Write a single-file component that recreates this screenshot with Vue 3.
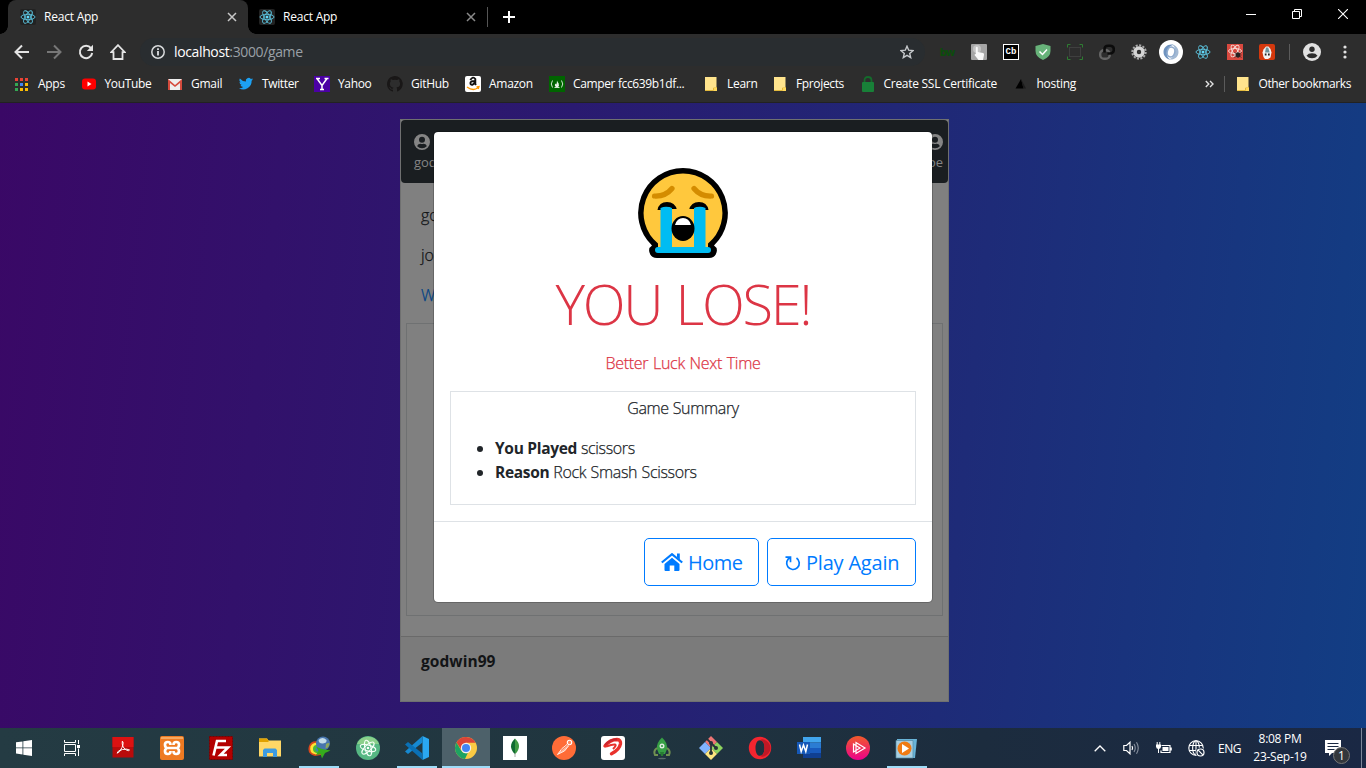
<script setup>
const tabs = [
  { title: 'React App', active: true },
  { title: 'React App', active: false }
]
const summary = [
  { label: 'You Played', value: 'scissors' },
  { label: 'Reason', value: 'Rock Smash Scissors' }
]
const appDots = ['#ea4335', '#ea4335', '#ea4335', '#34a853', '#4285f4', '#fbbc05', '#34a853', '#fbbc05', '#fbbc05']
</script>

<template>
  <svg class="defs" width="0" height="0">
    <symbol id="react" viewBox="0 0 16 16">
      <g fill="none" stroke="#5cc5e0" stroke-width=".9">
        <ellipse cx="8" cy="8" rx="7" ry="2.7" />
        <ellipse cx="8" cy="8" rx="7" ry="2.7" transform="rotate(60 8 8)" />
        <ellipse cx="8" cy="8" rx="7" ry="2.7" transform="rotate(120 8 8)" />
      </g>
      <circle cx="8" cy="8" r="1.5" fill="#61dafb" />
    </symbol>
    <symbol id="folder" viewBox="0 0 16 16">
      <path d="M2 1h11.500v10.500h.5v3.500H2z" fill="#ffe48d" />
      <path d="M2 14.500h8.500v-2.500h3v-1" fill="none" stroke="#e2b93d" />
      <path d="M11 12h3v3h-3z" fill="#ffd95c" />
    </symbol>
    <symbol id="user" viewBox="0 0 16 16">
      <path fill-rule="evenodd" fill="currentColor" d="M8 0a8 8 0 1 0 0 16A8 8 0 0 0 8 0zm0 2.700a3 3 0 1 1 0 6 3 3 0 0 1 0-6zM3.200 12.200c.6-2 2.400-2.600 3.400-2.400q1.400.4 2.800 0c1-.2 2.800.4 3.400 2.400A6.400 6.400 0 0 1 8 14.200a6.400 6.400 0 0 1-4.800-2z" />
    </symbol>
  </svg>

  <div class="screen">
    <header class="chrome">
      <div class="tabstrip">
        <div v-for="(t, i) in tabs" :key="i" class="tab" :class="{ active: t.active }">
          <span class="favicon"><svg width="16" height="16"><use href="#react" /></svg></span>
          <span class="tab-title">{{ t.title }}</span>
          <svg class="tab-close" width="10" height="10" viewBox="0 0 10 10"><path d="M1 1l8 8M9 1L1 9" stroke="currentColor" stroke-width="1.500" /></svg>
        </div>
        <i class="tab-sep"></i>
        <svg class="plus" width="12" height="12" viewBox="0 0 12 12"><path d="M6 0v12M0 6h12" stroke="#fff" stroke-width="2" /></svg>
        <div class="win">
          <svg width="10" height="10" viewBox="0 0 10 10"><path d="M0 5.500h10" stroke="#fff" /></svg>
          <svg width="10" height="10" viewBox="0 0 10 10"><path d="M.5 2.500h7v7h-7zM2.500 2.500v-2h7v7h-2" fill="none" stroke="#fff" /></svg>
          <svg width="10" height="10" viewBox="0 0 10 10"><path d="M0 0l10 10M10 0L0 10" stroke="#fff" stroke-width="1.100" /></svg>
        </div>
      </div>

      <div class="toolbar">
        <div class="nav">
          <svg width="16" height="16" viewBox="0 0 16 16"><path d="M15 8H2M8 1.500L1.500 8 8 14.500" fill="none" stroke="#e4e4e4" stroke-width="2" /></svg>
          <svg width="16" height="16" viewBox="0 0 16 16"><path d="M1 8h13M8 1.500L14.500 8 8 14.500" fill="none" stroke="#777" stroke-width="2" /></svg>
          <svg width="16" height="16" viewBox="0 0 16 16"><path d="M13 4.200A6.200 6.200 0 1 0 14.200 9" fill="none" stroke="#e4e4e4" stroke-width="2" /><path d="M15 .8v6.200H8.800z" fill="#e4e4e4" /></svg>
          <svg width="16" height="16" viewBox="0 0 16 16"><path d="M8 1.200L1.200 8.200h2.300v6.800h9V8.200h2.300z" fill="none" stroke="#e4e4e4" stroke-width="1.800" /></svg>
        </div>
        <div class="omnibox">
          <svg width="14" height="14" viewBox="0 0 14 14"><circle cx="7" cy="7" r="6.200" fill="none" stroke="#d8dadc" stroke-width="1.500" /><path d="M7 6v4.500M7 3.300v1.600" stroke="#e8eaed" stroke-width="1.700" /></svg>
          <span class="url">localhost<span>:3000/game</span></span>
          <svg class="star" width="14" height="14" viewBox="0 0 14 14"><path d="M7 1.200l1.700 4 4.300.4-3.300 2.800 1 4.200L7 10.300l-3.700 2.300 1-4.200L1 5.600l4.300-.4z" fill="none" stroke="#c6c9cc" stroke-width="1.400" /></svg>
        </div>
        <div class="extensions">
          <b class="bw">bw</b>
          <svg width="16" height="16" viewBox="0 0 16 16"><rect width="16" height="16" rx="1" fill="#a5a5a5" /><circle cx="6" cy="5" r="4" fill="#c4c4c4" /><path d="M4.800 3.500q1-1.500 2 0v4.500l5.200 1q1.500.5 1 2l-1 5H7.500L3.500 11q.5-1.200 1.300-.8z" fill="#f8f8f8" /></svg>
          <span class="cb">Cb</span>
          <svg width="16" height="16" viewBox="0 0 16 16"><path d="M8 0l7.500 2v5q0 6-7.500 9Q.5 13 .5 7V2z" fill="#67b279" /><path d="M4.500 7.500l3 3 4.500-5" fill="none" stroke="#fff" stroke-width="1.500" /></svg>
          <svg width="16" height="16" viewBox="0 0 16 16"><path d="M.5 3.500V.5h3M12.500 .5h3v3M15.500 12.500v3h-3M3.500 15.500h-3v-3" fill="none" stroke="#2e7d32" /><rect x="2.500" y="3.500" width="11" height="9" fill="none" stroke="#3f3f3f" /></svg>
          <svg width="16" height="16" viewBox="0 0 16 16"><rect x="1.200" y="6.200" width="9.500" height="8.500" rx="3.800" fill="none" stroke="#656565" stroke-width="2.400" /><path d="M5.500 8.500V5.500q0-3.800 3.800-3.800h1.700q3.800 0 3.800 3.800t-3.800 4H8.500" fill="none" stroke="#0b0b0b" stroke-width="2.600" /></svg>
          <svg width="16" height="16" viewBox="0 0 16 16"><circle cx="8" cy="8" r="6.700" fill="none" stroke="#aaa" stroke-width="2" stroke-dasharray="2.100 1.400" /><circle cx="8" cy="8" r="4" fill="none" stroke="#d5d5d5" stroke-width="3.600" /><circle cx="8" cy="8" r="1.300" fill="#333" /></svg>
          <svg width="24" height="24" viewBox="0 0 24 24"><circle cx="12" cy="12" r="12" fill="#fff" /><path d="M14.500 4.700C9 3.500 4.500 7 4.500 12c0 4 3 7 6.500 7.500-2.500-2-3.500-4-3-7.500.5-4 3-6.500 6.500-7.300z" fill="#6f93bf" /><path d="M9.500 19.300c5.500 1.200 10-2.300 10-7.300 0-4-3-7-6.500-7.500 2.500 2 3.500 4 3 7.500-.5 4-3 6.500-6.500 7.300z" fill="#a3b9d3" /><ellipse cx="12" cy="12" rx="3.800" ry="5" fill="none" stroke="#8fabcd" stroke-width="1.600" transform="rotate(15 12 12)" /></svg>
          <svg width="16" height="16"><use href="#react" /></svg>
          <svg width="16" height="16" viewBox="0 0 16 16"><rect width="16" height="16" fill="#d9493f" /><g fill="none" stroke="#f6dcd8" stroke-width=".9"><ellipse cx="8" cy="7" rx="6.500" ry="2.500" /><ellipse cx="8" cy="7" rx="6.500" ry="2.500" transform="rotate(60 8 7)" /><ellipse cx="8" cy="7" rx="6.500" ry="2.500" transform="rotate(120 8 7)" /></g><ellipse cx="11" cy="11" rx="2.200" ry="2.800" fill="#28201f" /><path d="M7.500 8.500l7 5M14.500 8.500l-7 5M7.500 11h7" stroke="#28201f" stroke-width=".7" /></svg>
          <svg width="16" height="16" viewBox="0 0 16 16"><rect width="16" height="16" rx="2" fill="#d4380d" /><path d="M3.500 8.500l1-3L7 2.500h2.500L11.500 5l1 3.500-1 5-2.500 1.500H6L4.500 13z" fill="#f4f4f4" /><path d="M7 3.500h2.200l1.500 5H6z" fill="#6c939b" /><path d="M5.800 9.500h1.700v2H5.800zM9 9.500h1.700v2H9z" fill="#222" /></svg>
        </div>
        <i class="bar-sep"></i>
        <svg class="profile" width="18" height="18" viewBox="0 0 18 18"><circle cx="9" cy="9" r="9" fill="#e1e1e1" /><circle cx="9" cy="6.200" r="2.700" fill="#2d2d2d" /><path d="M3.500 12.700Q5 10.300 9 10.300t5.500 2.400Q12.500 15.200 9 15.200t-5.500-2.500z" fill="#2d2d2d" /></svg>
        <svg class="dots" width="4" height="14" viewBox="0 0 4 14"><g fill="#e1e1e1"><circle cx="2" cy="2" r="1.600" /><circle cx="2" cy="7" r="1.600" /><circle cx="2" cy="12" r="1.600" /></g></svg>
      </div>

      <nav class="bookmarks">
        <a><span class="apps"><i v-for="(c, i) in appDots" :key="i" :style="{ background: c }"></i></span><em class="t-apps">Apps</em></a>
        <a><svg width="16" height="16" viewBox="0 0 16 16"><rect x="1" y="2.500" width="14" height="11" rx="3" fill="#f00" /><path d="M6.500 5.500v5L10.500 8z" fill="#fff" /></svg><em class="t-tight">YouTube</em></a>
        <a><svg width="16" height="16" viewBox="0 0 16 16"><rect x="1" y="3" width="14" height="11" fill="#eee" /><path d="M1 14V3l7 6 7-6v11h-2V7L8 11 3 7v7z" fill="#d54b3d" /></svg><em>Gmail</em></a>
        <a><svg width="16" height="16" viewBox="-1.500 -1 27 27"><path d="M24 4.600a10 10 0 0 1-2.800.8 5 5 0 0 0 2.100-2.700 10 10 0 0 1-3.100 1.200 4.900 4.900 0 0 0-8.400 4.500A14 14 0 0 1 1.700 3.200a4.900 4.900 0 0 0 1.500 6.500 5 5 0 0 1-2.200-.6 4.900 4.900 0 0 0 3.900 4.900 5 5 0 0 1-2.200.1 4.900 4.900 0 0 0 4.600 3.400A10 10 0 0 1 0 19.500 14 14 0 0 0 21.500 7.100 10 10 0 0 0 24 4.600z" fill="#1da1f2" /></svg><em class="t-tight">Twitter</em></a>
        <a><svg width="16" height="16" viewBox="0 0 16 16"><rect width="16" height="16" fill="#4b00a5" /><path d="M3 2.500l5 7 5-7M8 9v5M2 2.500h4M10.500 2.500h4M6 13.500h4" fill="none" stroke="#fff" stroke-width="1.500" /></svg><em class="t-tight">Yahoo</em></a>
        <a><svg width="16" height="16" viewBox="0 0 16 16"><path d="M8 0C3.600 0 0 3.600 0 8c0 3.500 2.300 6.500 5.500 7.600.4.100.5-.2.500-.4v-1.500c-2.200.5-2.700-.9-2.700-.9-.4-.9-.9-1.200-.9-1.200-.7-.5.100-.5.100-.5.800.1 1.200.8 1.200.8.700 1.200 1.900.9 2.300.7.100-.5.300-.9.500-1.100-1.800-.2-3.600-.9-3.600-4 0-.9.300-1.600.8-2.100-.1-.2-.4-1 .1-2.100 0 0 .7-.2 2.200.8a7.600 7.600 0 0 1 4 0c1.500-1 2.200-.8 2.200-.8.4 1.100.2 1.900.1 2.100.5.600.8 1.300.8 2.100 0 3.100-1.900 3.700-3.700 3.900.3.300.6.800.6 1.500v2.200c0 .2.100.5.500.4A8 8 0 0 0 8 0z" fill="#191717" /></svg><em>GitHub</em></a>
        <a><svg width="16" height="16" viewBox="0 0 16 16"><rect width="16" height="16" rx="2" fill="#fff" /><path d="M5.300 4.100Q8-.2 10.300 3v5l.7 1M10 5Q5.500 5 5.400 7q0 2.300 2.500 1.500Q10 7.500 10 5" fill="none" stroke="#111" stroke-width="1.900" /><path d="M2 11q6 4.500 11 .8M11.500 10.800l2.500-.3-.8 2.500" fill="none" stroke="#f90" stroke-width="1.300" /></svg><em>Amazon</em></a>
        <a><svg width="16" height="16" viewBox="0 0 16 16"><rect width="16" height="16" fill="#006400" /><path d="M3.500 4.500q-2.500 3.500 0 7M12.500 4.500q2.500 3.500 0 7M5.500 11.500h5" fill="none" stroke="#e8f0e8" stroke-width=".9" /><path d="M8 4.500q.5 1.500 1.700 3Q10.500 10 9 11H7Q5 9.500 6.500 7.500l.7 1Q8 7 8 4.500z" fill="#e8f0e8" /></svg><em class="t-tight">Camper fcc639b1df...</em></a>
        <a><svg width="16" height="16"><use href="#folder" /></svg><em>Learn</em></a>
        <a><svg width="16" height="16"><use href="#folder" /></svg><em class="t-tight">Fprojects</em></a>
        <a><svg width="16" height="16" viewBox="0 0 16 16"><path d="M4.500 7V4.500q0-3.500 3.500-3.500t3.500 3.500V7" fill="none" stroke="#146c2c" stroke-width="1.800" /><rect x="2" y="6" width="12" height="10" rx="1" fill="#188038" /></svg><em>Create SSL Certificate</em></a>
        <a><svg width="16" height="16" viewBox="0 0 16 16"><path d="M8 3l2.500 9.500H2.500z" fill="#000" /><path d="M8 3l5 9.500h-2.500z" fill="#1c1c1c" /></svg><em>hosting</em></a>
        <svg class="more" width="9" height="8" viewBox="0 0 9 8"><path d="M.8 1l3 3-3 3M5 1l3 3-3 3" fill="none" stroke="#e1e1e1" stroke-width="1.400" /></svg>
        <i class="bar-sep"></i>
        <a class="other"><svg width="16" height="16"><use href="#folder" /></svg><em>Other bookmarks</em></a>
      </nav>
    </header>

    <main class="page">
      <section class="card">
        <div class="card-head">
          <div><svg width="16" height="16"><use href="#user" /></svg><span>godwin99</span></div>
          <div class="right"><svg width="16" height="16"><use href="#user" /></svg><span>johndoe</span></div>
        </div>
        <div class="log">
          <p>godwin99</p>
          <p>johndoe</p>
          <p class="link">Waiting</p>
        </div>
        <div class="board"></div>
        <div class="card-foot">godwin99</div>
      </section>

      <div class="modal">
        <div class="modal-body">
          <svg class="emoji" width="90" height="90" viewBox="0 0 90 90">
            <path d="M45 0a45 45 0 0 0-31 77.500Q10 80 11.500 84.500 13 90 19 90h52q6 0 7.500-5.500Q80 80 76 77.500A45 45 0 0 0 45 0z" fill="#000" />
            <path d="M45 5.500A39.500 39.500 0 0 0 20 75.500V80h50v-4.500A39.500 39.500 0 0 0 45 5.500z" fill="#ffc83d" />
            <path d="M16.500 28q11 .5 17.500-7.500M73.500 28Q62.500 28.500 56 20.500" fill="none" stroke="#d48c00" stroke-width="5.200" stroke-linecap="round" />
            <path d="M19.500 42Q21 34 29 34t10 8h-4q-2-3-6-3t-6 3zM51 42Q53 34 61 34t9.500 8h-3.500q-2-3-6-3t-6 3z" fill="#000" />
            <path d="M22.500 40q5.500-2.500 11.500 0v39h22V40q6-2.500 11.500 0v39H70q3 0 3 3t-3 3H20q-3 0-3-3t3-3h2.500z" fill="#00bcf2" />
            <path d="M34 41v38h22V41z" fill="#ffc83d" />
            <ellipse cx="45" cy="60.500" rx="11.500" ry="12.500" fill="#000" />
            <path d="M37 57q2-7 8-7t8 7z" fill="#fff" />
          </svg>
          <h1>YOU LOSE!</h1>
          <p class="luck">Better Luck Next Time</p>
          <div class="summary">
            <p>Game Summary</p>
            <ul>
              <li v-for="s in summary" :key="s.label"><b>{{ s.label }}</b> <span>{{ s.value }}</span></li>
            </ul>
          </div>
        </div>
        <div class="modal-foot">
          <button class="home"><svg width="22" height="18" viewBox="0 0 22 18"><path d="M11 4.800l7.500 6.200v6q0 1-1 1h-4.200v-5.500H8.700V18H4.500q-1 0-1-1v-6z" fill="#007bff" /><path d="M.8 9.500L11 1.200l10.200 8.300" fill="none" stroke="#007bff" stroke-width="2.200" /><path d="M16 .5h2.800v6.200L16 4.500z" fill="#007bff" /></svg><span>Home</span></button>
          <button class="again"><svg width="16" height="16" viewBox="0 0 16 16"><path d="M.5 2.200h5v5M5.300 2.500A6.300 6.300 0 1 0 11.500 3" fill="none" stroke="#007bff" stroke-width="1.700" /></svg><span>Play Again</span></button>
        </div>
      </div>
    </main>

    <footer class="taskbar">
      <div class="cell start"><svg width="16" height="16" viewBox="0 0 16 16"><path d="M0 2.300l6.500-.9v6.100H0zM7.300 1.300L16 0v7.500H7.300zM0 8.300h6.500v6.200L0 13.600zM7.300 8.300H16V16l-8.700-1.300z" fill="#fff" /></svg></div>
      <div class="cell view"><svg width="17" height="16" viewBox="0 0 17 16"><path d="M.5 0v2.500h11V0M.5 16v-2.500h11V16M.5 4.500h11v7H.5zM14.500 0v4M14.500 8.500V16" fill="none" stroke="#fff" /><path d="M13 5h3v3h-3z" fill="#fff" /></svg></div>
      <div class="cell"><svg width="24" height="24" viewBox="0 0 24 24"><rect x="1.500" y="1" width="21" height="20.500" fill="#b80b0b" /><path d="M1.500 1h21v10h-21z" fill="#dc1212" /><path d="M11.300 5.200q1.800 1-.3 6.300-2.500 5.500-5 5.700.5-2.700 5.500-3.700t7 .5q-.5 1.500-3.500-.2-4.500-3-3.700-8.600z" fill="none" stroke="#fff" stroke-width="1" /></svg></div>
      <div class="cell"><svg width="24" height="24" viewBox="0 0 24 24"><rect width="24" height="24" rx="2" fill="#ee7a22" /><path d="M1 1h22v2H1z" fill="#f6a860" /><path d="M10.500 9V8.500Q10.500 6 7.700 6T5 8.700 7 12q-2 .7-2 3.300T7.700 18t2.800-2.500V15M13.500 9v-.5q0-2.500 2.800-2.500T19 8.700 17 12q2 .7 2 3.300T16.300 18t-2.800-2.500V15M8 12h8" fill="none" stroke="#fff" stroke-width="2.700" /></svg></div>
      <div class="cell"><svg width="24" height="24" viewBox="0 0 24 24"><rect x=".5" y=".5" width="23" height="23" fill="#b30000" stroke="#7d0000" stroke-dasharray="2 1" /><path d="M4.500 19.500L8 5h9M6.500 11.500h6M12 11.500h7L11.500 19H18" fill="none" stroke="#fff" stroke-width="2.600" /></svg></div>
      <div class="cell"><svg width="24" height="24" viewBox="0 0 24 24"><path d="M1 2.500h8l1.500 2H23v16H1z" fill="#ffd766" /><path d="M1 2.500h8l1.500 2v1.500H1z" fill="#e0a100" /><path d="M5 21v-7l1.500-1.500h11L19 14v7h-4v-4H9v4z" fill="#3d9be0" /></svg></div>
      <div class="cell open"><svg width="24" height="24" viewBox="0 0 24 24"><path d="M13 6Q4 3.500 2 10-.5 18 8 20l6-1 1-8z" fill="#d9481c" /><path d="M13 7Q5.500 5.500 3.500 10.500 1.500 17 9 18.500l5-1 1-7z" fill="#ffe234" /><path d="M13 9Q7 8 6 12q-.5 4.500 4 5.200l5-1V10z" fill="#48b83c" /><path d="M13 10.500q-4 0-4.500 2.500.5 3 5 2.500z" fill="#3c7fc0" /><circle cx="16" cy="7.500" r="7" fill="#4775ae" /><path d="M11.500 4q4-4 8 0 .5 3-3.500 3.500T11.500 4z" fill="#c3dcea" /><path d="M19 8q3-2 3.500 0-1 4-4 4.500z" fill="#8ea85a" /><path d="M9.500 11q6.500 3 14 3.500l-5.500 2.500-3 5.500-1.500-4.500-4.500 1 2.500-4z" fill="#35ad1c" /></svg></div>
      <div class="cell"><svg width="24" height="24" viewBox="0 0 24 24"><circle cx="12" cy="12" r="12" fill="#56b783" /><path d="M1 8a12 12 0 0 1 22 0z" fill="#8bd08b" /><g fill="none" stroke="#f4fff7" stroke-width="1.100"><ellipse cx="12" cy="12" rx="8" ry="3" transform="rotate(15 12 12)" /><ellipse cx="12" cy="12" rx="8" ry="3" transform="rotate(75 12 12)" /><ellipse cx="12" cy="12" rx="8" ry="3" transform="rotate(135 12 12)" /></g><circle cx="12" cy="12" r="1.300" fill="#fff" /></svg></div>
      <div class="cell open"><svg width="24" height="24" viewBox="0 0 24 24"><path d="M17.500 0L24 3v18l-6.500 3z" fill="#2aa8f2" /><path d="M17.500 0v6.500L3 18 0 15.500z" fill="#1689d1" /><path d="M17.500 24v-6.500L3 6 0 8.500z" fill="#0a70b5" /></svg></div>
      <div class="cell active"><svg width="24" height="24" viewBox="0 0 24 24"><circle cx="12" cy="12" r="11" fill="#fbca43" /><path d="M2.500 6.500A11 11 0 0 1 21.600 6.700H12L8 15z" fill="#db4437" /><path d="M2.500 6.500L7.300 14.700q2 3.300 6.500 2.300L11 23A11 11 0 0 1 2.500 6.500z" fill="#1ea362" /><circle cx="12" cy="12" r="5.200" fill="#f1f1f1" /><circle cx="12" cy="12" r="4" fill="#4285f4" /></svg></div>
      <div class="cell"><svg width="24" height="24" viewBox="0 0 24 24"><path d="M0 0h24v24H0z" fill="#fff" /><path d="M12 2.500Q20 10 12 18.500z" fill="#3f9a43" /><path d="M12 2.500Q4 10 12 18.500z" fill="#116b32" /><path d="M12 17v4" stroke="#aaa" /></svg></div>
      <div class="cell"><svg width="24" height="24" viewBox="0 0 24 24"><circle cx="12" cy="12" r="12" fill="#ff6c37" /><path d="M5.500 18.500l4.500-6 5-4 1.500 1.500-4 5z" stroke="#fff" stroke-width=".8" fill="#ffb59b" /><circle cx="17.500" cy="6.500" r="2.200" fill="#ff8a60" stroke="#fff" stroke-width="1.100" /><path d="M9 14.500l7-6" stroke="#ff6c37" stroke-width=".8" /></svg></div>
      <div class="cell"><svg width="24" height="24" viewBox="0 0 24 24"><rect width="24" height="24" rx="3" fill="#fff" /><path d="M4 10Q9 3.500 16 3.500q4 .3 3.500 4.300-1 6-9 10" fill="none" stroke="#e9312b" stroke-width="3.400" stroke-linecap="round" /><path d="M5 10.500q7-2.500 9-2t-2 4.500" fill="none" stroke="#e9312b" stroke-width="2" /><path d="M4 9Q9 3.500 16 3.300" fill="none" stroke="#c92531" stroke-width="2" /></svg></div>
      <div class="cell"><svg width="24" height="24" viewBox="0 0 24 24"><path d="M12 1.500Q18 7 17 13l-2 5H9l-2-5Q6 7 12 1.500z" fill="#37a045" /><circle cx="12" cy="10" r="2.500" fill="#e0eee1" /><circle cx="12" cy="10" r="1.100" fill="#399948" /><path d="M7 12q-4 3-2 7h3M17 12q4 3 2 7h-3" fill="none" stroke="#719151" stroke-width="2" /><path d="M10 16h4l-1 4h-2z" fill="#267b33" /><ellipse cx="12" cy="22.500" rx="4" ry=".8" fill="#596c6a" /></svg></div>
      <div class="cell"><svg width="24" height="24" viewBox="0 0 24 24"><path d="M12 0l6 6-6 6-6-6z" fill="#ed7474" /><path d="M6 6l6 6-6 6-6-6z" fill="#80b3ff" /><path d="M18 6l6 6-6 6-6-6z" fill="#8dd35f" /><path d="M12 12l6 6-6 6-6-6z" fill="#ffe680" /><path d="M8 3l4 4v11M12 7l5 5" fill="none" stroke="#263238" stroke-width="1.800" /><g fill="#263238"><circle cx="12" cy="7" r="2" /><circle cx="17" cy="12" r="2" /><circle cx="12" cy="17" r="2" /></g></svg></div>
      <div class="cell"><svg width="24" height="24" viewBox="0 0 24 24"><path fill-rule="evenodd" d="M12 .8a11.200 11.200 0 1 1 0 22.400A11.200 11.200 0 0 1 12 .8zm0 3.400c-3 0-4.500 3.500-4.500 7.800s1.500 7.800 4.500 7.800 4.500-3.500 4.500-7.800S15 4.200 12 4.200z" fill="#f4252f" /><path d="M12 19.800c3 0 4.500-3.500 4.500-7.800S15 4.200 12 4.200q3-2 6.500.8 4 3 4 7t-4 7q-3.500 2.800-6.500.8z" fill="#c01825" /></svg></div>
      <div class="cell"><svg width="24" height="24" viewBox="0 0 24 24"><path d="M6 1h18v5.500H6z" fill="#41a5ee" /><path d="M6 6.500h18V12H6z" fill="#2b7cd3" /><path d="M6 12h18v5H6z" fill="#185abd" /><path d="M6 17h18v5H6z" fill="#103f91" /><path d="M0 6h13v12H0z" fill="#1558b8" /><path d="M2.500 8.500l1.700 7L6.500 9l2.300 6.500 1.700-7" fill="none" stroke="#fff" stroke-width="1.500" /></svg></div>
      <div class="cell"><svg width="24" height="24" viewBox="0 0 24 24"><defs><linearGradient id="ps" x2="0" y2="1"><stop stop-color="#f15b2a" /><stop offset="1" stop-color="#ec008c" /></linearGradient></defs><circle cx="12" cy="12" r="12" fill="url(#ps)" /><path d="M10 6.500v11l9-5.500zM7.500 8v8l6.500-4z" fill="none" stroke="#fff" stroke-width="1.200" /></svg></div>
      <div class="cell open"><svg class="player" width="24" height="24" viewBox="0 0 24 24"><path d="M3 3h20l-2 19H3z" fill="#69b4d8" /><path d="M2 4.500h17v17.500H2z" fill="#a8cfe2" stroke="#558aa5" stroke-width=".7" /><circle cx="10.500" cy="12.500" r="7" fill="#f07b13" /><path d="M8 8v9l7-4.500z" fill="#fff" /></svg></div>

      <div class="tray">
        <svg width="12" height="7" viewBox="0 0 12 7"><path d="M.7 6.300L6 1l5.300 5.300" fill="none" stroke="#fff" stroke-width="1.300" /></svg>
        <svg width="17" height="14" viewBox="0 0 17 14"><path d="M.8 4.500h2.700L7 1.200v11.600L3.500 9.500H.8z" fill="none" stroke="#fff" stroke-width="1.200" /><path d="M9 5q1.200 2 0 4" fill="none" stroke="#fff" stroke-width="1.200" /><path d="M11 3q2.500 4 0 8M13.500 1.200q3.500 5.800 0 11.600" fill="none" stroke="#8992a0" stroke-width="1.100" /></svg>
        <svg width="16" height="12" viewBox="0 0 16 12"><path d="M5.500 3.500h8.500v7H5v-2M15.200 5.500v3" fill="none" stroke="#fff" stroke-width="1.200" /><path d="M6.500 5h6v4h-6zM0 2.500h5v2.200Q4.700 7 2.500 7T0 4.700z" fill="#fff" /><path d="M1.200 0v3M3.800 0v3M2.500 6v5" fill="none" stroke="#fff" /></svg>
        <svg width="17" height="17" viewBox="0 0 17 17"><g fill="none" stroke="#fff" stroke-width="1.100"><circle cx="8" cy="8" r="7.200" /><ellipse cx="8" cy="8" rx="3.400" ry="7.200" /><path d="M1 5.500h14M1 10.500h9M8 1v14" /></g><circle cx="12.500" cy="12.500" r="5" fill="#1c2b42" /><circle cx="12.500" cy="12.500" r="3.500" fill="none" stroke="#fff" stroke-width="1.200" /><path d="M10.200 10.200l4.600 4.600" stroke="#fff" stroke-width="1.200" /></svg>
        <span class="lang">ENG</span>
        <div class="clock"><span>8:08 PM</span><span class="date">23-Sep-19</span></div>
        <div class="note"><svg width="16" height="16" viewBox="0 0 16 16"><path d="M0 0h16v13H7l-3 3v-3H0z" fill="#fff" /><path d="M2.500 3.500h11M2.500 6.500h11M2.500 9.500h7" stroke="#1b2942" /></svg><b>1</b></div>
      </div>
    </footer>
  </div>
</template>

<style>
html, body { margin: 0; overflow: hidden; }
</style>

<style scoped>
* { box-sizing: border-box; }
.defs { position: absolute; }
svg { display: block; flex: none; }
.screen { width: 1366px; height: 768px; display: flex; flex-direction: column; font-family: "Open Sans", "Noto Sans", sans-serif; overflow: hidden; }
.chrome { height: 103px; background: #2d2d2d; border-bottom: 1px solid #222; color: #fff; font-size: 12px; flex: none; }
.tabstrip { height: 34px; background: #000; display: flex; align-items: center; padding-left: 8px; }
.tab { width: 240px; height: 34px; display: flex; align-items: center; padding: 0 11px 0 12px; position: relative; }
.tab + .tab { width: 239px; padding-left: 11px; }
.tab.active { background: #2d2d2d; border-radius: 8px 8px 0 0; }
.tab.active::before, .tab.active::after { content: ""; position: absolute; bottom: 0; width: 8px; height: 8px; }
.tab.active::before { left: -8px; background: radial-gradient(circle at 0 0, #000 7.500px, #2d2d2d 8px); }
.tab.active::after { right: -8px; background: radial-gradient(circle at 100% 0, #000 7.500px, #2d2d2d 8px); }
.favicon { width: 16px; height: 16px; background: #222; border-radius: 2px; }
.tab-title { margin-left: 8px; flex: 1; letter-spacing: -.22px; padding-bottom: 2px; }
.tab-close { color: #c8c8c8; }
.tab + .tab .tab-close { color: #8a8a8a; }
.tab-sep { width: 1px; height: 20px; background: #555; }
.plus { margin-left: 15px; }
.win { margin-left: auto; display: flex; gap: 36px; padding: 0 18px 6px 0; }
.toolbar { height: 36px; display: flex; align-items: center; }
.nav { display: flex; gap: 16px; padding-left: 14px; width: 140px; flex: none; }
.omnibox { width: 785px; height: 28px; border-radius: 14px; background: #292d30; display: flex; align-items: center; padding: 0 11px; font-size: 14px; flex: none; }
.url { margin-left: 9px; flex: 1; letter-spacing: -.37px; padding-bottom: 1px; }
.url span { color: #9aa0a6; }
.extensions { display: flex; margin-left: 6px; flex: none; }
.extensions > * { width: 16px; margin: 0 8px; flex: none; align-self: center; }
.extensions > svg[width="24"] { width: 24px; margin: 0 4px; }
.bw { color: #0a4d0a; font-size: 11px; line-height: 16px; text-align: center; letter-spacing: -1px; }
.cb { height: 16px; border: 1px solid #fff; background: #000; font: bold 9px/15px "Liberation Mono", monospace; text-align: center; }
.bar-sep { width: 1px; height: 16px; background: #5b5b5b; flex: none; }
.toolbar .bar-sep { margin-left: 6px; }
.profile { margin-left: 13px; }
.dots { margin-left: 22px; }
.bookmarks { height: 28px; display: grid; align-items: center; grid-template-columns: 67px 86px 71px 76px 73px 78px 84px 154px 69px 87.500px 153px 192px 19px 11px 1fr; padding-left: 14px; }
.bookmarks a { display: flex; align-items: center; gap: 8px; white-space: nowrap; }
.bookmarks a:nth-child(2) { gap: 7.500px; }
em { font-style: normal; letter-spacing: -.28px; padding-bottom: 2px; }
.t-tight { letter-spacing: -.36px; }
.other em { letter-spacing: -.4px; }
.apps { width: 13px; height: 13px; display: grid; grid-template-columns: repeat(3, 3px); gap: 2px; flex: none; margin-left: 1px; }
.apps i { height: 3px; }
.t-apps { margin-left: 2px; }
.page { flex: 1; position: relative; background: linear-gradient(96deg, #3a0866 0%, #2a1a70 40%, #1e2b78 70%, #123e84 100%); }
.card { width: 549px; height: 583px; margin: 16px 0 0 400px; border: 1px solid #6f7070; background: #808080; display: flex; flex-direction: column; color: #121416; }
.card-head { height: 63px; background: #1a1e21; border-radius: 4px; display: flex; justify-content: space-between; padding: 14px 5px 0 13px; color: #858585; font-size: 13px; line-height: 24px; }
.card-head span { display: block; letter-spacing: -.1px; }
.right { display: flex; flex-direction: column; align-items: flex-end; }
.log { height: 140px; padding: 20px 20px 0; font-size: 16px; line-height: 24px; font-weight: 300; -webkit-text-stroke: .25px currentColor; }
.log p { margin: 0 0 16px; }
.log .link { color: #004085; }
.board { height: 293px; margin: 0 5px 20px; border: 1px solid #6f7172; }
.card-foot { flex: 1; border-top: 1px solid #6a6a6a; background: #7b7b7b; padding: 12px 20px; font-size: 15.500px; line-height: 24px; font-weight: 700; letter-spacing: .05px; }
.modal { position: absolute; left: 433px; top: 28px; width: 500px; height: 472px; border: 1px solid rgba(0, 0, 0, .2); border-radius: 5px; background: #fff; background-clip: padding-box; color: #212529; font-weight: 300; }
.modal-body { height: 389px; padding: 36px 16px 0; text-align: center; font-size: 16px; line-height: 24px; }
.emoji { margin: 0 auto; }
h1 { margin: 12px 0 0; font-size: 56px; line-height: 67px; font-weight: 300; color: #dc3545; letter-spacing: -2.300px; word-spacing: 2px; }
p { margin: 0; }
.luck { color: #dc3545; margin: 14px 0 16px; letter-spacing: -.28px; word-spacing: .8px; }
.luck, .summary p, li span { -webkit-text-stroke: .25px currentColor; }
.summary { height: 114px; border: 1px solid #dee2e6; padding-top: 4px; }
.summary p { letter-spacing: -.33px; }
ul { text-align: left; margin: 16px 0 0; padding-left: 44px; letter-spacing: -.34px; }
li span { word-spacing: .6px; }
li b { font-weight: 700; font-size: 15.500px; letter-spacing: -.3px; }
.modal-foot { height: 81px; border-top: 1px solid #dee2e6; padding: 16px; display: flex; justify-content: flex-end; gap: 8px; }
button { height: 48px; background: #fff; border: 1px solid #007bff; border-radius: 5px; color: #007bff; font: 400 20px/30px "Open Sans", sans-serif; padding: 2px 15px 0 16px; display: flex; align-items: center; white-space: nowrap; letter-spacing: -.5px; }
.home { width: 115px; }
.home svg { margin-top: -2px; }
.home span { margin-left: 5px; }
.again { width: 149px; padding-left: 17px; letter-spacing: -.2px; }
.again span { margin-left: 5px; }
.taskbar { height: 40px; flex: none; background: linear-gradient(90deg, #243b43 0%, #20353f 45%, #1c2c3e 72%, #1a2844 100%); display: flex; color: #fff; font-size: 12px; }
.cell { width: 48px; margin-right: 1px; display: flex; align-items: center; justify-content: center; border-bottom: 2px solid transparent; padding-top: 2px; position: relative; flex: none; }
.cell.start { margin: 0; }
.cell.view { width: 47px; margin-right: 4px; padding-left: 1px; }
.cell.open::after, .cell.active::after { content: ""; position: absolute; left: 4px; right: 4px; bottom: -2px; height: 2px; background: #9edcf8; }
.cell.active { background: #4d616a; }
.cell.active::after { left: 0; right: 0; }
.player { margin-left: -2px; }
.tray { margin-left: auto; display: flex; align-items: center; width: 268px; border-right: 1px solid #7c8699; margin-right: 4px; flex: none; }
.tray > svg:nth-child(2) { margin-left: 17px; }
.tray > svg:nth-child(3) { margin-left: 16px; }
.tray > svg:nth-child(4) { margin-left: 16px; }
.lang { margin-left: 13px; width: 24px; letter-spacing: -.5px; }
.clock { margin-left: 7px; width: 62px; display: flex; flex-direction: column; text-align: center; line-height: 18px; letter-spacing: -.28px; padding-bottom: 1px; }
.note { margin-left: 14px; position: relative; }
.note b { position: absolute; left: 8px; top: 7px; width: 17px; height: 17px; border-radius: 50%; background: #33373c; border: 1px solid #777; font-weight: 400; font-size: 12px; line-height: 15px; text-align: center; }
</style>
